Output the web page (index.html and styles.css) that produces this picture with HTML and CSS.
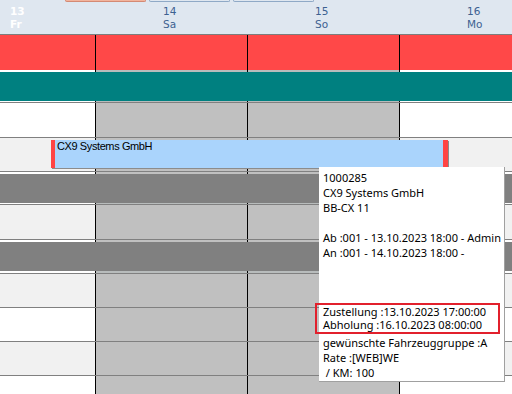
FILE: index.html
```html
<!DOCTYPE html>
<html lang="de">
<head>
<meta charset="utf-8">
<title>Planung</title>
<link rel="stylesheet" href="styles.css">
</head>
<body>
<div class="gantt">
  <div class="header">
    <div class="tabs">
      <span class="tab tab-active"></span>
      <span class="tab"></span>
      <span class="tab"></span>
    </div>
    <div class="hcols">
      <div class="hc hc-first today"><span>13</span><span>Fr</span></div>
      <div class="hc hc-day"><span>14</span><span>Sa</span></div>
      <div class="hc hc-day"><span>15</span><span>So</span></div>
      <div class="hc hc-last"><span>16</span><span>Mo</span></div>
    </div>
  </div>

  <div class="strip h35"><div class="c c1 red"></div><div class="c c2 red"></div><div class="c c3 red"></div><div class="c c4 red"></div></div>
  <div class="strip h2"><div class="c c1 wd"></div><div class="c c2 we"></div><div class="c c3 we"></div><div class="c c4 wd"></div></div>
  <div class="band teal"></div>
  <div class="strip h1"><div class="c c1 wd"></div><div class="c c2 we"></div><div class="c c3 we"></div><div class="c c4 wd"></div></div>

  <div class="row h34"><div class="c c1 wd"></div><div class="c c2 we"></div><div class="c c3 we"></div><div class="c c4 wd"></div></div>
  <div class="row h33 has-event">
    <div class="c c1 alt"></div><div class="c c2 we"></div><div class="c c3 we"></div><div class="c c4 alt"></div>
    <div class="event"><span class="event-label">CX9 Systems GmbH</span></div>
  </div>
  <div class="row h2"><div class="c c1 wd"></div><div class="c c2 we"></div><div class="c c3 we"></div><div class="c c4 wd"></div></div>
  <div class="band dark"></div>
  <div class="strip h1"><div class="c c1 wd"></div><div class="c c2 we"></div><div class="c c3 we"></div><div class="c c4 wd"></div></div>

  <div class="row h34"><div class="c c1 alt"></div><div class="c c2 we"></div><div class="c c3 we"></div><div class="c c4 alt"></div></div>
  <div class="row h2"><div class="c c1 wd"></div><div class="c c2 we"></div><div class="c c3 we"></div><div class="c c4 wd"></div></div>
  <div class="band dark"></div>
  <div class="strip h2"><div class="c c1 wd"></div><div class="c c2 we"></div><div class="c c3 we"></div><div class="c c4 wd"></div></div>

  <div class="row h33"><div class="c c1 alt"></div><div class="c c2 we"></div><div class="c c3 we"></div><div class="c c4 alt"></div></div>
  <div class="row h33"><div class="c c1 wd"></div><div class="c c2 we"></div><div class="c c3 we"></div><div class="c c4 wd"></div></div>
  <div class="row h33"><div class="c c1 alt"></div><div class="c c2 we"></div><div class="c c3 we"></div><div class="c c4 alt"></div></div>
  <div class="row h33"><div class="c c1 wd"></div><div class="c c2 we"></div><div class="c c3 we"></div><div class="c c4 wd"></div></div>

  <div class="tooltip">
    <div class="tl">1000285</div>
    <div class="tl">CX9 Systems GmbH</div>
    <div class="tl">BB-CX 11</div>
    <div class="tl">&nbsp;</div>
    <div class="tl">Ab :001 - 13.10.2023 18:00 - Admin</div>
    <div class="tl">An :001 - 14.10.2023 18:00 -</div>
    <div class="tl">&nbsp;</div>
    <div class="tl">&nbsp;</div>
    <div class="tl">&nbsp;</div>
    <div class="highlight">
      <div class="tl">Zustellung :13.10.2023 17:00:00</div>
      <div class="tl">Abholung :16.10.2023 08:00:00</div>
    </div>
    <div class="tl">gewünschte Fahrzeuggruppe :A</div>
    <div class="tl">Rate :[WEB]WE</div>
    <div class="tl">&nbsp;/ KM: 100</div>
  </div>
</div>
</body>
</html>
```

FILE: styles.css
```css
html, body {
  margin: 0;
  padding: 0;
  background: #ffffff;
}
body {
  width: 512px;
  height: 394px;
  overflow: hidden;
}
.gantt {
  position: relative;
  width: 512px;
  height: 394px;
  overflow: hidden;
}

/* header */
.header {
  height: 34px;
  background: #dfe7f0;
  border-bottom: 1px solid #7d7d7d;
}
.tabs {
  display: flex;
  gap: 3px;
  height: 3px;
  padding-left: 65px;
}
.tab {
  width: 79px;
  height: 1px;
  background: #dfe7f0;
  border: 1px solid #8fa9c6;
  border-top: none;
  border-radius: 0 0 4px 4px;
}
.tab-active {
  background: #f2b49d;
  border-color: #d48a74;
}
.hcols {
  display: flex;
  padding-top: 2px;
}
.hc {
  display: flex;
  flex-direction: column;
  font-family: "DejaVu Sans", sans-serif;
  font-size: 10.5px;
  line-height: 13px;
  color: #3d6190;
  box-sizing: border-box;
  padding-left: 68px;
}
.hc-first {
  width: 95px;
  flex: none;
  padding-left: 10px;
}
.hc-day {
  width: 152px;
  flex: none;
}
.hc-last {
  flex: 1;
}
.hc.today {
  color: #ffffff;
  font-weight: bold;
}

/* column cells */
.strip, .row {
  display: flex;
}
.row {
  border-top: 1px solid #808080;
  position: relative;
}
.h1 { height: 1px; }
.h2 { height: 2px; }
.h33 { height: 33px; }
.h34 { height: 34px; }
.h35 { height: 35px; }
.c {
  box-sizing: border-box;
}
.c1 { width: 95px; flex: none; }
.c2, .c3 { width: 152px; flex: none; border-left: 1px solid #000; }
.c4 { flex: 1; border-left: 1px solid #000; }
.wd { background: #ffffff; }
.alt { background: #f1f1f1; }
.we { background: #c0c0c0; }
.red { background: #ff4848; }
.strip .we { background: #b8bcbc; }

.band {
  height: 29px;
}
.teal { background: #008080; }
.dark { background: #808080; }

/* event bar */
.event {
  position: absolute;
  left: 51px;
  top: 2px;
  width: 397px;
  height: 28px;
  box-sizing: border-box;
  background: #aad4fc;
  border-left: 4px solid #ff4444;
  border-right: 5px solid #ff4444;
  box-shadow: 1px 1px 0 #8c8c8c;
  padding-left: 2px;
}
.event-label {
  display: block;
  font-family: "Liberation Sans", Arial, sans-serif;
  font-size: 11px;
  line-height: 13px;
  letter-spacing: -0.4px;
  color: #000;
}

/* tooltip */
.tooltip {
  position: absolute;
  left: 319px;
  top: 167px;
  width: 186px;
  height: 215px;
  box-sizing: border-box;
  background: #ffffff;
  border-right: 1px solid #a0a0a0;
  border-bottom: 1px solid #a0a0a0;
  padding: 3px 0 0 4px;
  font-family: "Noto Sans", sans-serif;
  font-size: 11px;
  line-height: 15px;
  color: #000;
  white-space: nowrap;
}
.highlight {
  margin: -2.5px 0 1.5px -8px;
  width: 185px;
  box-sizing: border-box;
  border: 2px solid #e2202c;
  padding-left: 6px;
}
.highlight .tl {
  line-height: 13.5px;
}
```
